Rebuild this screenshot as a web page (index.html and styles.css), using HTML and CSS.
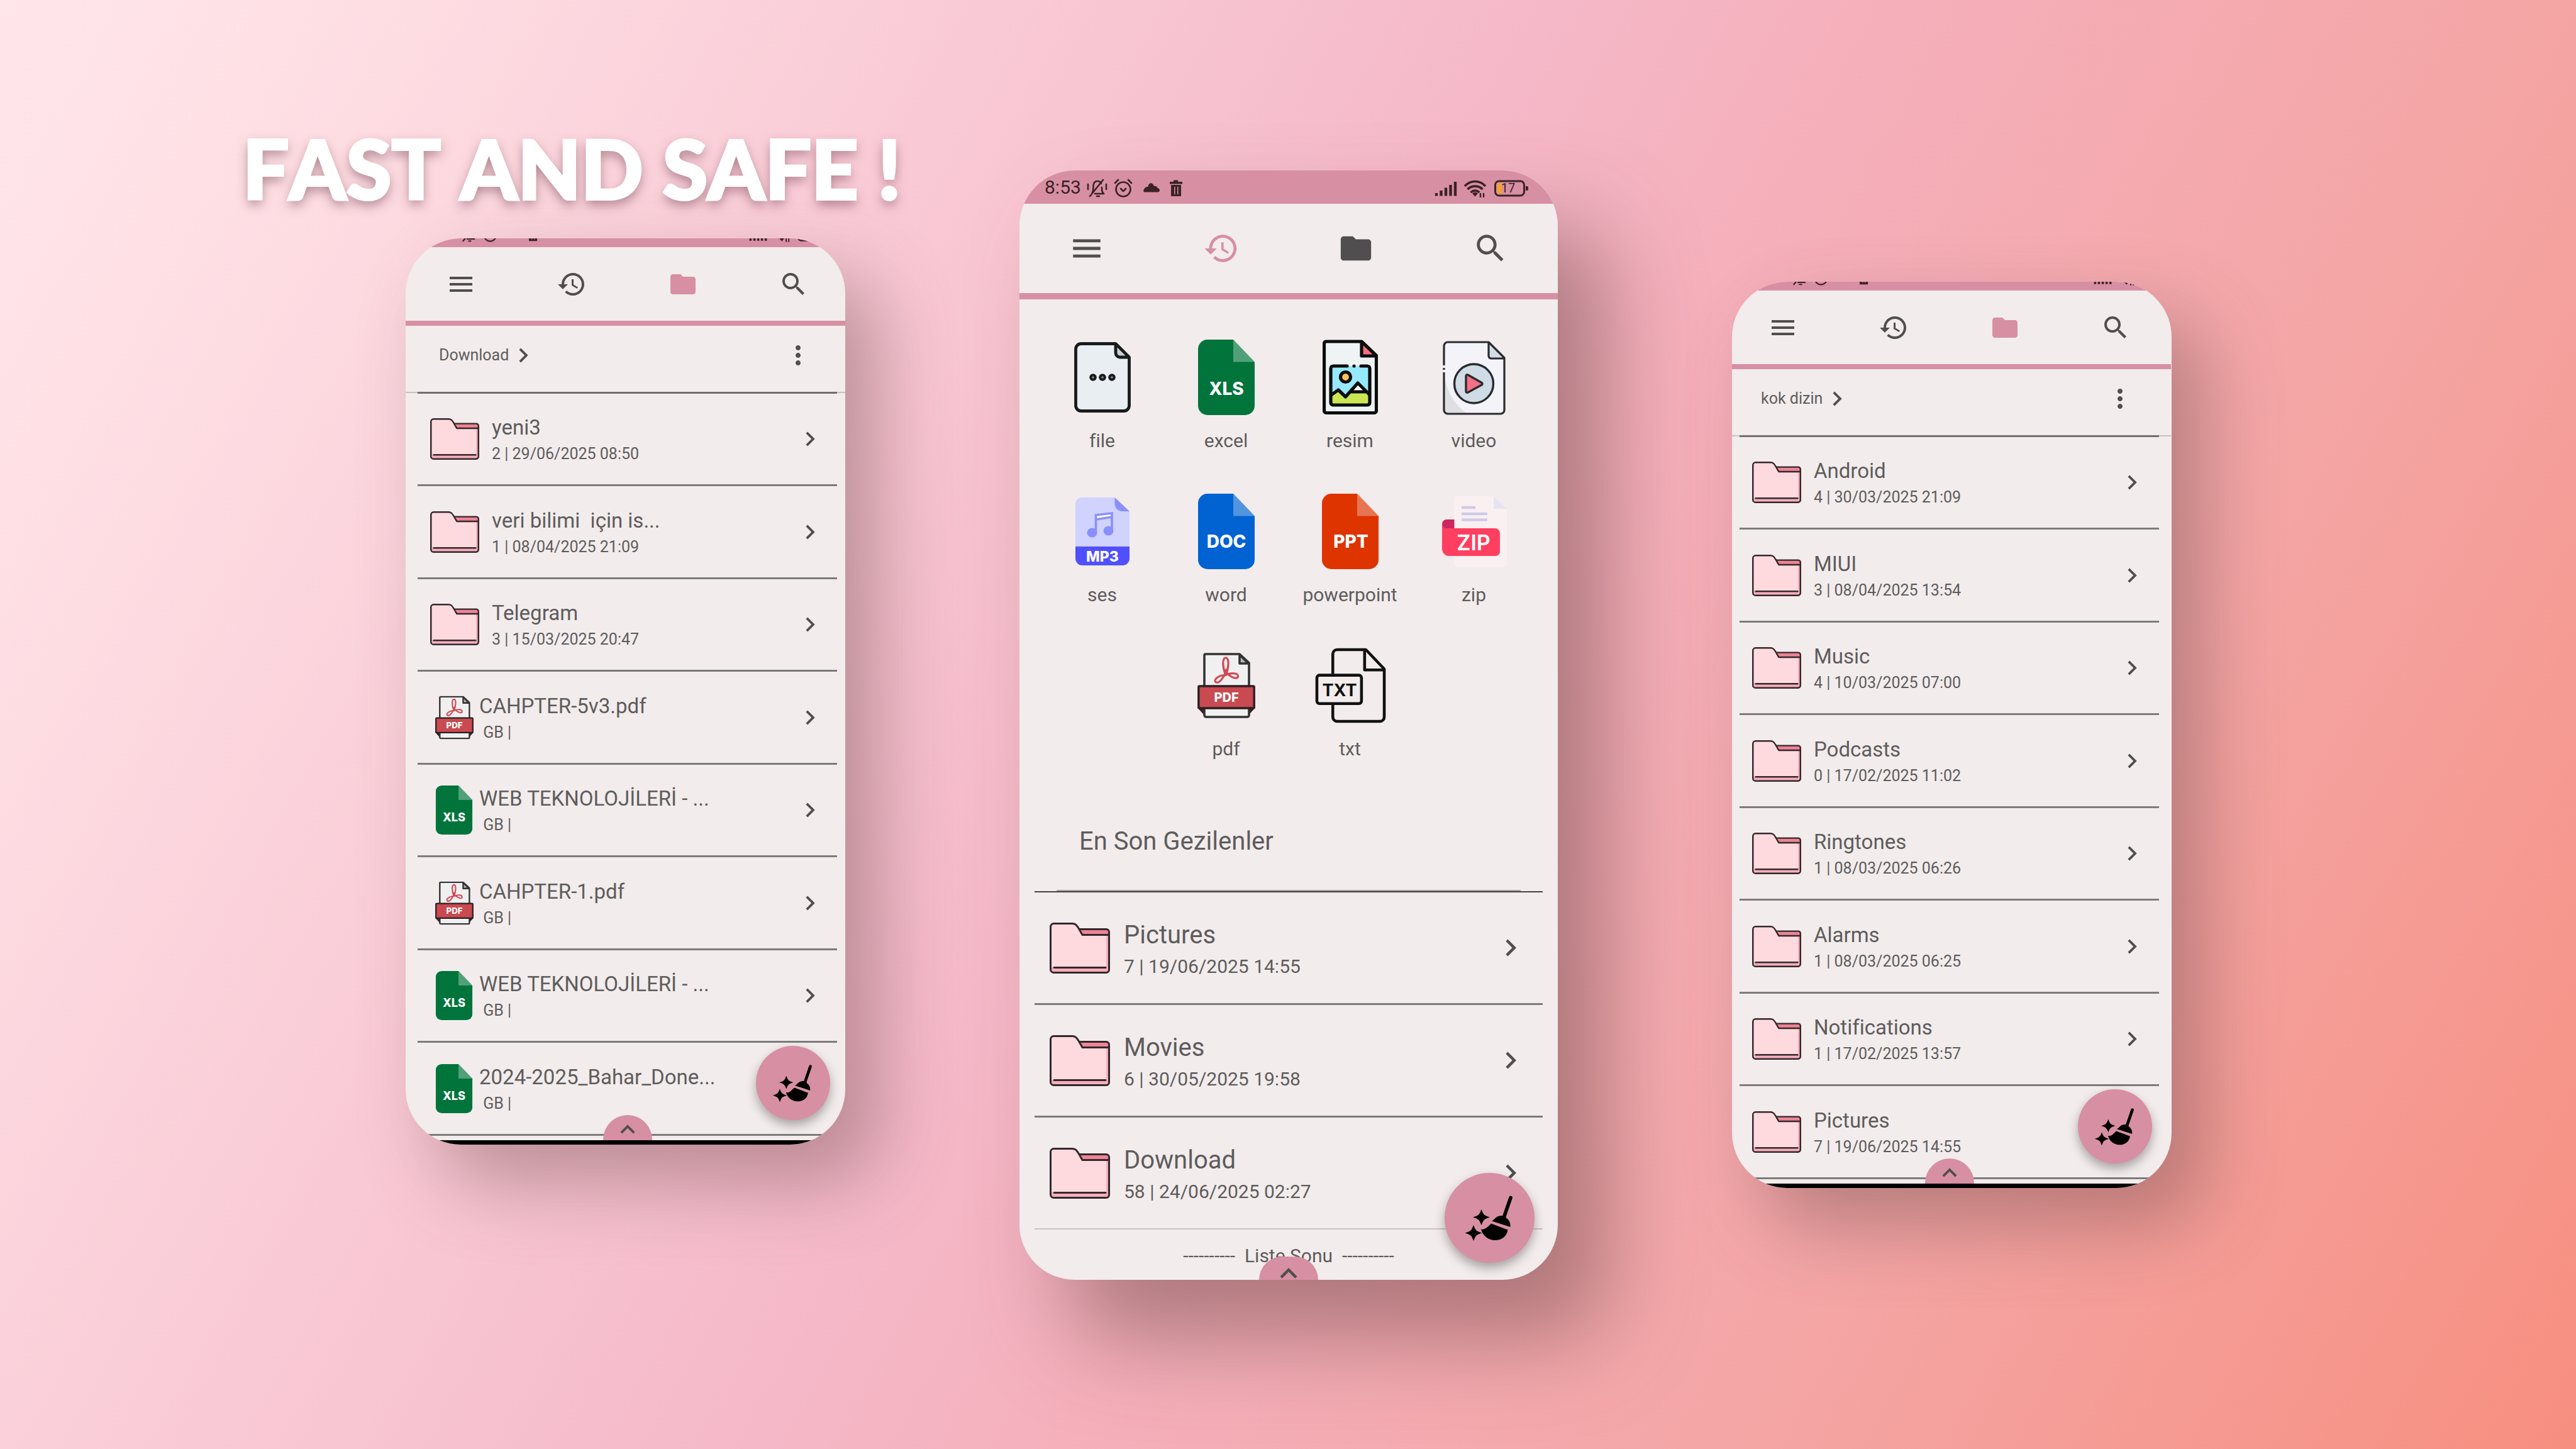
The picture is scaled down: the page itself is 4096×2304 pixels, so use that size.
FILE: index.html
```html
<!DOCTYPE html>
<html lang="tr">
<head>
<meta charset="utf-8">
<meta name="viewport" content="width=device-width, initial-scale=1">
<title>Fast and safe</title>
<link rel="stylesheet" href="styles.css">
</head>
<body>
<svg class="sprite" aria-hidden="true">
  <symbol id="i-menu" viewBox="0 0 24 24"><path d="M3 18h18v-2H3v2zm0-5h18v-2H3v2zm0-7v2h18V6H3z"/></symbol>
  <symbol id="i-history" viewBox="0 0 24 24"><path d="M13 3c-4.97 0-9 4.03-9 9H1l3.89 3.89.07.14L9 12H6c0-3.87 3.13-7 7-7s7 3.13 7 7-3.13 7-7 7c-1.93 0-3.68-.79-4.94-2.06l-1.42 1.42C8.27 19.99 10.51 21 13 21c4.97 0 9-4.03 9-9s-4.03-9-9-9zm-1 5v5l4.28 2.54.72-1.21-3.5-2.08V8H12z"/></symbol>
  <symbol id="i-folder" viewBox="0 0 24 24"><path d="M10 4H4c-1.1 0-1.99.9-1.99 2L2 18c0 1.1.9 2 2 2h16c1.1 0 2-.9 2-2V8c0-1.1-.9-2-2-2h-8l-2-2z"/></symbol>
  <symbol id="i-search" viewBox="0 0 24 24"><path d="M15.5 14h-.79l-.28-.27C15.41 12.59 16 11.11 16 9.5 16 5.91 13.09 3 9.5 3S3 5.91 3 9.5 5.91 16 9.5 16c1.61 0 3.09-.59 4.23-1.57l.27.28v.79l5 4.99L20.49 19l-4.99-5zm-6 0C7.01 14 5 11.99 5 9.5S7.01 5 9.5 5 14 7.01 14 9.5 11.99 14 9.5 14z"/></symbol>
  <symbol id="i-next" viewBox="0 0 24 24"><path d="M10 6L8.59 7.41 13.17 12l-4.58 4.59L10 18l6-6z"/></symbol>
  <symbol id="i-up" viewBox="0 0 24 24"><path d="M12 8l-6 6 1.41 1.41L12 10.83l4.59 4.58L18 14z"/></symbol>
  <symbol id="i-more" viewBox="0 0 24 24"><path d="M12 8c1.1 0 2-.9 2-2s-.9-2-2-2-2 .9-2 2 .9 2 2 2zm0 2c-1.1 0-2 .9-2 2s.9 2 2 2 2-.9 2-2-.9-2-2-2zm0 6c-1.1 0-2 .9-2 2s.9 2 2 2 2-.9 2-2-.9-2-2-2z"/></symbol>

  <symbol id="dir" viewBox="0 0 96 81">
    <path d="M50 11H90a4 4 0 0 1 4 4V24H50z" fill="#ee8495"/>
    <path d="M7 2H36C41 2 43 5 46 9L52 19.500H94.500V75a5 5 0 0 1-5 5H7a5 5 0 0 1-5-5V7a5 5 0 0 1 5-5z" fill="#f6aebb"/>
    <path d="M7 2H36C41 2 43 5 46 9L52 19.500H90V71H3V7a5 5 0 0 1 4-5z" fill="#fedade"/>
    <g fill="none" stroke="#33282b" stroke-width="3" stroke-linejoin="round" stroke-linecap="round">
      <path d="M48 10.500H90a4.500 4.500 0 0 1 4.500 4.500V75a4.500 4.500 0 0 1-4.500 4.500H6.500a5 5 0 0 1-5-5V6.500a5 5 0 0 1 5-5H36C41 1.500 43 4 46 9L52 19.500H94.500"/>
      <path d="M7 71.500H89"/>
    </g>
  </symbol>

  <symbol id="sheet" viewBox="0 0 90 120">
    <path d="M15 0H56L90 35.500V105a15 15 0 0 1-15 15H15a15 15 0 0 1-15-15V15A15 15 0 0 1 15 0z" fill="currentColor"/>
    <path d="M56 0L90 35.500H56z" fill="#fff" fill-opacity=".32"/>
  </symbol>

  <symbol id="file" viewBox="0 0 90 112">
    <path d="M10 2.500H66L87.500 25V101a8.500 8.500 0 0 1-8.500 8.500H11a8.500 8.500 0 0 1-8.500-8.500V11A8.500 8.500 0 0 1 11 2.500z" fill="#e8eef1"/>
    <path d="M66 2.500V17a7 7 0 0 0 7 7H87" fill="#c9cfd2"/>
    <path d="M66 2.500L87.500 24V101a8.500 8.500 0 0 1-8.500 8.500H11a8.500 8.500 0 0 1-8.500-8.500V11A8.500 8.500 0 0 1 11 2.500zV17a7 7 0 0 0 7 7H87" fill="none" stroke="#181b1c" stroke-width="4.800" stroke-linejoin="round"/>
    <g fill="#8b9092" stroke="#181b1c" stroke-width="4"><circle cx="30" cy="56" r="3.800"/><circle cx="45" cy="56" r="3.800"/><circle cx="60" cy="56" r="3.800"/></g>
  </symbol>

  <symbol id="image" viewBox="0 0 88 119">
    <path d="M6 3H63L85 27V113a3 3 0 0 1-3 3H6a3 3 0 0 1-3-3V6a3 3 0 0 1 3-3z" fill="#eef3f4"/>
    <path d="M63 4V26H84z" fill="#fb6c84"/>
    <rect x="13" y="42" width="62" height="62" rx="4" fill="#96e9fb"/>
    <path d="M13 88L25 80L36 91L46 83H68L75 88V101a3 3 0 0 1-3 3H16a3 3 0 0 1-3-3z" fill="#cbe653"/>
    <path d="M45 82L56 69L69 82z" fill="#fff"/>
    <g fill="none" stroke="#0b0d0c" stroke-width="5.200" stroke-linejoin="round" stroke-linecap="round">
      <path d="M62 3L85.500 25.500V113a3.500 3.500 0 0 1-3.500 3.500H6a3.500 3.500 0 0 1-3.500-3.500V6A3.500 3.500 0 0 1 6 3zV26H85"/>
      <path d="M39 42H17a4 4 0 0 0-4 4V100a4 4 0 0 0 4 4H71a4 4 0 0 0 4-4V46a4 4 0 0 0-4-4H61"/>
      <path d="M14 88L25 80L36.500 91L56 69L74 87M46 83H68"/>
      <circle cx="36.500" cy="59.500" r="8" fill="#fdc15e"/>
    </g>
    <circle cx="50" cy="42" r="2.600" fill="#0b0d0c"/>
  </symbol>

  <symbol id="video" viewBox="0 0 100 118">
    <path d="M8 2H73L98 27V110a6 6 0 0 1-6 6H8a6 6 0 0 1-6-6V8a6 6 0 0 1 6-6z" fill="#f5f3fa"/>
    <path d="M3 58C8 85 22 104 38 115H8a5 5 0 0 1-5-5z" fill="#dfdfe2"/>
    <path d="M73 3V24a4 4 0 0 0 4 4H97z" fill="#d2dde7"/>
    <path d="M2 39V8A6 6 0 0 1 8 2H73L98 27V110a6 6 0 0 1-6 6H8a6 6 0 0 1-6-6V50M73 2V24a4 4 0 0 0 4 4H97M2 43V46" fill="none" stroke="#2a2b2f" stroke-width="3.200" stroke-linejoin="round"/>
    <circle cx="49.500" cy="68" r="31" fill="#cfdce6" stroke="#2a2b2f" stroke-width="3.400"/>
    <path d="M37 56a2 2 0 0 1 3-2L62 66.500a2 2 0 0 1 0 3.500L40 82a2 2 0 0 1-3-2z" fill="#f57084" stroke="#2a2b2f" stroke-width="3.400" stroke-linejoin="round"/>
  </symbol>

  <symbol id="mp3" viewBox="0 0 86 108">
    <path d="M10 0H62.500L86 22V78H0V10A10 10 0 0 1 10 0z" fill="#d0d2ff"/>
    <path d="M62.500 0L86 22H75A12 12 0 0 1 62.500 10z" fill="#8a90fb"/>
    <path d="M0 78H86V97a11 11 0 0 1-11 11H11A11 11 0 0 1 0 97z" fill="#504ffd"/>
    <path d="M32.500 28L57 25V30L32.500 34z" fill="#fff"/>
    <path d="M32.500 56V28L58 25V52M32.500 35L58 31" fill="none" stroke="#8a90fb" stroke-width="3.600"/>
    <ellipse cx="26.500" cy="56" rx="8" ry="7.500" fill="#8a90fb"/><ellipse cx="52.500" cy="53" rx="8" ry="7.500" fill="#8a90fb"/>
  </symbol>

  <symbol id="zip" viewBox="0 0 103 113">
    <path d="M24 0H82L103 20V107a6 6 0 0 1-6 6H25a6 6 0 0 1-6-6V5a5 5 0 0 1 5-5z" fill="#faf0f2"/>
    <path d="M82 0L103 20H82z" fill="#e8e3f3"/>
    <path d="M31 18H53M31 28H72M31 37.500H72" stroke="#cfcbe6" stroke-width="4.400"/>
    <path d="M7 37H19.500V52H0V44a7 7 0 0 1 7-7z" fill="#ca2662"/>
    <path d="M0 44a7 7 0 0 0 7 7H84a8 8 0 0 1 8 8V88a7 7 0 0 1-7 7H11A11 11 0 0 1 0 84z" fill="#ff3f60"/>
  </symbol>

  <symbol id="pdf" viewBox="0 0 92 104">
    <path d="M2 88H90L81 98H11z" fill="#3a1f25" stroke="#3a1f25" stroke-width="2"/>
    <path d="M13 2H67L82 16V99a3 3 0 0 1-3 3H14a3 3 0 0 1-3-3V4a2 2 0 0 1 2-2z" fill="#f0f0f0" stroke="#343334" stroke-width="3.600" stroke-linejoin="round"/>
    <path d="M67 3V17H81z" fill="#b9b9b9" stroke="#343334" stroke-width="3.600" stroke-linejoin="round"/>
    <g fill="none" stroke="#d24a57" stroke-width="3.200" stroke-linecap="round">
      <path d="M44.500 34C40 24 39 8 45 8C51 8 50 24 45 35"/>
      <path d="M46 27C43 38 35 49 30 47C24 44 32 36 45 35"/>
      <path d="M43 27C48 36 60 43 64 39C67 33 57 30 43 36"/>
    </g>
    <rect x="1.800" y="53" width="88.400" height="35" rx="1.500" fill="#c94a50" stroke="#2b2024" stroke-width="3.400"/>
  </symbol>

  <symbol id="txt" viewBox="0 0 113 121">
    <g fill="none" stroke="#111" stroke-width="4.600" stroke-linejoin="round">
      <path d="M28 42V10A7 7 0 0 1 35 3H81L110.500 34V111a7 7 0 0 1-7 7H35a7 7 0 0 1-7-7V91"/>
      <path d="M79 4V35.500H110"/>
      <rect x="2.500" y="44" width="71.500" height="45.500" rx="4"/>
    </g>
  </symbol>

  <symbol id="broom" viewBox="0 0 143 143">
    <path d="M105 39.500L94.500 70" stroke="#000" stroke-width="5.600" stroke-linecap="round"/>
    <path d="M75 76.500C79 75 81 69.500 87 68.500C93 67 97 69 98.500 72C103 75 105 80 104.500 86z"/>
    <path d="M74 80.500L100.500 90.500C99 101 91 107 80 107C69 107 60 99 58 89.500C65 91 69 85 74 80.500z"/>
    <path d="M58.500 60C60.500 66 63 68.500 69.500 70.500C63 72.500 60.500 75 58.500 81C56.500 75 54 72.500 47.500 70.500C54 68.500 56.500 66 58.500 60z" stroke="#000" stroke-width="1.500"/>
    <path d="M46 85C48 91 50.500 93.500 57 95.500C50.500 97.500 48 100 46 106C44 100 41.500 97.500 35 95.500C41.500 93.500 44 91 46 85z" stroke="#000" stroke-width="1.500"/>
  </symbol>

  <symbol id="st-left" viewBox="0 0 160 53">
    <g fill="none" stroke="#3a2228" stroke-width="2.600" stroke-linecap="round" stroke-linejoin="round">
      <path d="M12 37C15 34 14 30 14.500 24C15 19 18 17 21 17C24 17 26 18 27 21M28 27C28 32 28 34 31 37H17M20 41H24M30 15L9 41M6 22V30M35 22V30"/>
      <circle cx="62" cy="30" r="11.500"/><path d="M58 29L62 33L66 29M49 20L54 15M75 20L70 15"/>
    </g>
    <path d="M97 34.500H117C121 34.500 121 28.500 116.500 28C116 25 113 24 111 25C109 18 102 19 101.500 26C96 25 91 34.500 97 34.500z" fill="#3a2228"/>
    <path d="M136 18H142V15.500H149V18H156V21.500H136zM138 23H154V41H138zM143 26V38H144.500V26zM148 26V38H149.500V26z" fill="#3a2228" fill-rule="evenodd"/>
  </symbol>
  <symbol id="st-right" viewBox="0 0 152 53">
    <path d="M3 40.500V36M10.500 40.500V32M18 40.500V27.500M25.500 40.500V23M33 40.500V18" fill="none" stroke="#3a2228" stroke-width="4.400"/>
    <g fill="none" stroke="#3a2228" stroke-width="3.600"><path d="M48 25C57 15 72 15 81 25M52.500 30C59 23.500 70 23.500 76.500 30M57.500 35C62 31 67 31 71.500 35"/></g>
    <path d="M60 36.500C63 34 66 34 69 36.500L64.500 41.500z" fill="#3a2228"/><path d="M73 36V43M78 36V43" stroke="#3a2228" stroke-width="2.400"/>
    <rect x="96.500" y="17" width="46" height="23" rx="6" fill="none" stroke="#3a2228" stroke-width="3"/>
    <path d="M145 25H147a2 2 0 0 1 2 2V30a2 2 0 0 1-2 2H145z" fill="#3a2228"/>
    <path d="M103 20H107V37H103a3.500 3.500 0 0 1-3.500-3.500V23.500A3.500 3.500 0 0 1 103 20z" fill="#f4a22e"/>
  </symbol>
</svg>

<main class="scene">
  <h1 class="headline">FAST AND SAFE !</h1>

  <section class="phone phone-left" aria-label="Download">
    <div class="screen">
      <div class="status">
        <svg class="st-left"><use href="#st-left"/></svg>
        <svg class="st-right"><use href="#st-right"/></svg>
      </div>
      <nav class="tabs">
        <button type="button" aria-label="Menu"><svg><use href="#i-menu"/></svg></button>
        <button type="button" aria-label="History"><svg><use href="#i-history"/></svg></button>
        <button type="button" class="on" aria-label="Folders"><svg><use href="#i-folder"/></svg></button>
        <button type="button" aria-label="Search"><svg><use href="#i-search"/></svg></button>
      </nav>
      <div class="crumbs">
        <a href="#download">Download</a><svg class="next"><use href="#i-next"/></svg>
        <button type="button" class="more" aria-label="More"><svg><use href="#i-more"/></svg></button>
      </div>
      <ul class="list">
        <li><a href="#yeni3"><svg class="dir"><use href="#dir"/></svg><span class="meta"><b>yeni3</b><small>2 | 29/06/2025 08:50</small></span><svg class="next"><use href="#i-next"/></svg></a></li>
        <li><a href="#veri"><svg class="dir"><use href="#dir"/></svg><span class="meta"><b>veri bilimi&nbsp; için is...</b><small>1 | 08/04/2025 21:09</small></span><svg class="next"><use href="#i-next"/></svg></a></li>
        <li><a href="#telegram"><svg class="dir"><use href="#dir"/></svg><span class="meta"><b>Telegram</b><small>3 | 15/03/2025 20:47</small></span><svg class="next"><use href="#i-next"/></svg></a></li>
        <li><a class="doc" href="#c5"><svg class="pdf" viewBox="0 0 92 104"><use href="#pdf" width="92" height="104"/><text x="46" y="78" class="t-pdf">PDF</text></svg><span class="meta"><b>CAHPTER-5v3.pdf</b><small>&nbsp;GB |</small></span><svg class="next"><use href="#i-next"/></svg></a></li>
        <li><a class="doc" href="#web1"><svg class="xls" viewBox="0 0 90 120"><use class="green" href="#sheet" width="90" height="120"/><text x="45" y="88" class="t-badge">XLS</text></svg><span class="meta"><b>WEB TEKNOLOJİLERİ - ...</b><small>&nbsp;GB |</small></span><svg class="next"><use href="#i-next"/></svg></a></li>
        <li><a class="doc" href="#c1"><svg class="pdf" viewBox="0 0 92 104"><use href="#pdf" width="92" height="104"/><text x="46" y="78" class="t-pdf">PDF</text></svg><span class="meta"><b>CAHPTER-1.pdf</b><small>&nbsp;GB |</small></span><svg class="next"><use href="#i-next"/></svg></a></li>
        <li><a class="doc" href="#web2"><svg class="xls" viewBox="0 0 90 120"><use class="green" href="#sheet" width="90" height="120"/><text x="45" y="88" class="t-badge">XLS</text></svg><span class="meta"><b>WEB TEKNOLOJİLERİ - ...</b><small>&nbsp;GB |</small></span><svg class="next"><use href="#i-next"/></svg></a></li>
        <li><a class="doc" href="#bahar"><svg class="xls" viewBox="0 0 90 120"><use class="green" href="#sheet" width="90" height="120"/><text x="45" y="88" class="t-badge">XLS</text></svg><span class="meta"><b>2024-2025_Bahar_Done...</b><small>&nbsp;GB |</small></span></a></li>
      </ul>
      <button type="button" class="pull" aria-label="Expand"><svg><use href="#i-up"/></svg></button>
      <button type="button" class="fab" aria-label="Clean"><svg><use href="#broom"/></svg></button>
    </div>
    <div class="navbar"></div>
  </section>

  <section class="phone phone-main" aria-label="Recent">
    <div class="screen">
      <div class="status">
        <span class="time">8:53</span>
        <svg class="st-left"><use href="#st-left"/></svg>
        <svg class="st-right" viewBox="0 0 152 53"><use href="#st-right" width="152" height="53"/><text x="117" y="35" class="t-bat">17</text></svg>
      </div>
      <nav class="tabs">
        <button type="button" aria-label="Menu"><svg><use href="#i-menu"/></svg></button>
        <button type="button" class="on" aria-label="History"><svg><use href="#i-history"/></svg></button>
        <button type="button" aria-label="Folders"><svg><use href="#i-folder"/></svg></button>
        <button type="button" aria-label="Search"><svg><use href="#i-search"/></svg></button>
      </nav>
      <ul class="types">
        <li><a href="#files"><svg viewBox="0 0 120 120"><use href="#file" x="15" y="4" width="90" height="112"/></svg>file</a></li>
        <li><a href="#excel"><svg viewBox="0 0 120 120"><use class="green" href="#sheet" x="15" width="90" height="120"/><text x="60" y="88" class="t-badge">XLS</text></svg>excel</a></li>
        <li><a href="#resim"><svg viewBox="0 0 120 120"><use href="#image" x="16" width="88" height="119"/></svg>resim</a></li>
        <li><a href="#videos"><svg viewBox="0 0 120 120"><use href="#video" x="10" y="2" width="100" height="118"/></svg>video</a></li>
        <li><a href="#ses"><svg viewBox="0 0 120 120"><use href="#mp3" x="17" y="6" width="86" height="108"/><text x="60" y="108" class="t-mp3">MP3</text></svg>ses</a></li>
        <li><a href="#word"><svg viewBox="0 0 120 120"><use class="blue" href="#sheet" x="15" width="90" height="120"/><text x="60" y="86" class="t-badge">DOC</text></svg>word</a></li>
        <li><a href="#powerpoint"><svg viewBox="0 0 120 120"><use class="red" href="#sheet" x="15" width="90" height="120"/><text x="61" y="86" class="t-badge">PPT</text></svg>powerpoint</a></li>
        <li><a href="#zips"><svg viewBox="0 0 120 120"><use href="#zip" x="9" y="4" width="103" height="113"/><text x="59" y="90" class="t-zip">ZIP</text></svg>zip</a></li>
        <li><a href="#pdfs"><svg viewBox="0 0 120 120"><use href="#pdf" x="14" y="8" width="92" height="104"/><text x="60" y="86" class="t-pdf">PDF</text></svg>pdf</a></li>
        <li><a href="#txts"><svg viewBox="0 0 120 120"><use href="#txt" x="4" width="113" height="120"/><text x="43" y="77" class="t-txt">TXT</text></svg>txt</a></li>
      </ul>
      <h2 class="recent">En Son Gezilenler</h2>
      <ul class="list">
        <li><a href="#pictures"><svg class="dir"><use href="#dir"/></svg><span class="meta"><b>Pictures</b><small>7 | 19/06/2025 14:55</small></span><svg class="next"><use href="#i-next"/></svg></a></li>
        <li><a href="#movies"><svg class="dir"><use href="#dir"/></svg><span class="meta"><b>Movies</b><small>6 | 30/05/2025 19:58</small></span><svg class="next"><use href="#i-next"/></svg></a></li>
        <li><a href="#downloads"><svg class="dir"><use href="#dir"/></svg><span class="meta"><b>Download</b><small>58 | 24/06/2025 02:27</small></span><svg class="next"><use href="#i-next"/></svg></a></li>
      </ul>
      <p class="end">----------&nbsp; Liste Sonu &nbsp;----------</p>
      <button type="button" class="pull" aria-label="Expand"><svg><use href="#i-up"/></svg></button>
      <button type="button" class="fab" aria-label="Clean"><svg><use href="#broom"/></svg></button>
    </div>
  </section>

  <section class="phone phone-right" aria-label="kok dizin">
    <div class="screen">
      <div class="status">
        <svg class="st-left"><use href="#st-left"/></svg>
        <svg class="st-right"><use href="#st-right"/></svg>
      </div>
      <nav class="tabs">
        <button type="button" aria-label="Menu"><svg><use href="#i-menu"/></svg></button>
        <button type="button" aria-label="History"><svg><use href="#i-history"/></svg></button>
        <button type="button" class="on" aria-label="Folders"><svg><use href="#i-folder"/></svg></button>
        <button type="button" aria-label="Search"><svg><use href="#i-search"/></svg></button>
      </nav>
      <div class="crumbs">
        <a href="#root">kok dizin</a><svg class="next"><use href="#i-next"/></svg>
        <button type="button" class="more" aria-label="More"><svg><use href="#i-more"/></svg></button>
      </div>
      <ul class="list">
        <li><a href="#android"><svg class="dir"><use href="#dir"/></svg><span class="meta"><b>Android</b><small>4 | 30/03/2025 21:09</small></span><svg class="next"><use href="#i-next"/></svg></a></li>
        <li><a href="#miui"><svg class="dir"><use href="#dir"/></svg><span class="meta"><b>MIUI</b><small>3 | 08/04/2025 13:54</small></span><svg class="next"><use href="#i-next"/></svg></a></li>
        <li><a href="#music"><svg class="dir"><use href="#dir"/></svg><span class="meta"><b>Music</b><small>4 | 10/03/2025 07:00</small></span><svg class="next"><use href="#i-next"/></svg></a></li>
        <li><a href="#podcasts"><svg class="dir"><use href="#dir"/></svg><span class="meta"><b>Podcasts</b><small>0 | 17/02/2025 11:02</small></span><svg class="next"><use href="#i-next"/></svg></a></li>
        <li><a href="#ringtones"><svg class="dir"><use href="#dir"/></svg><span class="meta"><b>Ringtones</b><small>1 | 08/03/2025 06:26</small></span><svg class="next"><use href="#i-next"/></svg></a></li>
        <li><a href="#alarms"><svg class="dir"><use href="#dir"/></svg><span class="meta"><b>Alarms</b><small>1 | 08/03/2025 06:25</small></span><svg class="next"><use href="#i-next"/></svg></a></li>
        <li><a href="#notifications"><svg class="dir"><use href="#dir"/></svg><span class="meta"><b>Notifications</b><small>1 | 17/02/2025 13:57</small></span><svg class="next"><use href="#i-next"/></svg></a></li>
        <li><a href="#pictures2"><svg class="dir"><use href="#dir"/></svg><span class="meta"><b>Pictures</b><small>7 | 19/06/2025 14:55</small></span></a></li>
      </ul>
      <button type="button" class="pull" aria-label="Expand"><svg><use href="#i-up"/></svg></button>
      <button type="button" class="fab" aria-label="Clean"><svg><use href="#broom"/></svg></button>
    </div>
    <div class="navbar"></div>
  </section>
</main>
</body>
</html>
```
FILE: styles.css
```css
* { box-sizing: border-box; }

body {
  margin: 0;
  font-family: Roboto, "Liberation Sans", sans-serif;
  color: #5e5c5c;
}

.sprite { position: absolute; width: 0; height: 0; }

ul { margin: 0; padding: 0; list-style: none; }
a { color: inherit; text-decoration: none; }
button { padding: 0; border: 0; background: none; color: inherit; font: inherit; }
svg { display: block; flex: none; fill: currentColor; }

/* Backdrop and the three devices */
.scene {
  min-height: 100vh;
  display: grid;
  grid-template-columns: 645fr 699fr 277fr 856fr 277fr 699fr 643fr;
  align-items: start;
  overflow: hidden;
  background: linear-gradient(119deg, #ffe6ea 0%, #fedfe4 10%, #f5b9c9 45%, #f5b0bc 55%, #f4a5a4 76%, #f78f80 100%);
}

.headline {
  grid-area: 1 / 1 / 2 / 4;
  margin: 187px 0 0;
  padding-left: 386px;
  font-family: Lato, "Open Sans", sans-serif;
  font-weight: 900;
  font-size: 130px;
  line-height: 160px;
  font-kerning: none;
  color: #fff;
  white-space: nowrap;
  -webkit-text-stroke: 4px #fff;
  text-shadow: 0 8px 18px rgba(90, 40, 55, .5);
}

.phone {
  --row-title: 33px;
  --row-sub: 25px;
  position: relative;
  overflow: hidden;
  border-radius: 88px;
  background: #f2ecec;
}
.phone-left { grid-area: 1 / 2; margin-top: 379px; }
.phone-main { grid-area: 1 / 4; margin-top: 271px; }
.phone-right { grid-area: 1 / 6; margin-top: 448px; }

.scene .phone-left, .scene .phone-right { box-shadow: 52px 60px 120px rgba(105, 70, 72, .42); }
.scene .phone-main { box-shadow: 76px 92px 140px rgba(105, 68, 68, .5); }

.screen { position: relative; }
.phone-left .screen { margin-right: -6px; }
.phone-right .screen { margin-left: -7px; margin-right: 1px; }

/* Status strip */
.status {
  display: flex;
  align-items: center;
  height: 43px;
  margin-top: -29px;
  padding: 0 36px 0 84px;
  background: #d78fa3;
}
.st-left { width: 130px; height: 43px; }
.st-right { width: 123px; height: 43px; margin-left: auto; }
.phone-right .status { padding: 0 0 0 98px; }
.phone-main .status { height: 53px; margin-top: 0; padding: 0 44px 0 40px; }
.phone-main .st-left { width: 160px; height: 53px; margin-left: 5px; }
.phone-main .st-right { width: 152px; height: 53px; }
.time { font-size: 30px; line-height: 56px; color: #3a2228; }

/* Top tabs */
.tabs {
  display: grid;
  grid-template-columns: repeat(4, 1fr);
  height: 125px;
  border-bottom: 8px solid #d78fa3;
  color: #504e4e;
}
.tabs button { display: grid; place-items: center; }
.tabs svg { width: 48px; height: 48px; }
.tabs .on { color: #d78fa3; }
.phone-main .tabs { height: 152px; border-bottom-width: 10px; }
.phone-main .tabs svg { width: 58px; height: 58px; }

/* Breadcrumb bar */
.crumbs {
  display: flex;
  align-items: center;
  height: 107px;
  padding: 0 57px 11px 53px;
  border-bottom: 2px solid #c6c3c3;
  font-size: 25px;
  line-height: 32px;
}
.next { width: 46px; height: 46px; color: #504e4e; }
.more { margin-left: auto; color: #504e4e; }
.more svg { width: 48px; height: 48px; }

/* Rows */
.list {
  display: grid;
  grid-auto-rows: 147px 148px;
  margin: -2px 19px 0;
  border-top: 3px solid #706e6e;
}
.list li { border-bottom: 3px solid #7d7b7b; }
.list a { display: flex; align-items: center; height: 100%; padding: 0 20px; }
.dir { width: 78px; height: 68px; margin-right: 20px; }
.list .doc { padding-left: 28px; }
.pdf { width: 61px; height: 70px; margin-right: 9px; }
.xls { width: 60px; height: 78px; margin-right: 10px; }
.meta { flex: 1; padding-top: 8px; white-space: nowrap; }
.meta b, .meta small { display: block; font-weight: 400; }
.meta b { font-size: var(--row-title); line-height: 40px; }
.meta small { font-size: var(--row-sub); line-height: 44px; }

.phone-main { --row-title: 40px; --row-sub: 30px; }
.phone-main .list {
  grid-auto-rows: 179px;
  margin: 0 24px;
  border-top: 2px solid #4e3f42;
}
.phone-main .list a { padding: 0 24px; }
.phone-main .list li:last-child { height: 178px; border-bottom: 2px solid #c8c4c4; }
.phone-main .dir { width: 96px; height: 81px; margin-right: 22px; }
.phone-main .next { width: 54px; height: 54px; }
.phone-main .meta { padding-top: 11px; }
.phone-main .meta b { line-height: 48px; }
.phone-main .meta small { line-height: 52px; }

/* File types */
.types {
  display: flex;
  flex-wrap: wrap;
  justify-content: center;
  row-gap: 66px;
  padding: 64px 34px 0 32px;
}
.types li { width: 197px; }
.types a {
  display: flex;
  flex-direction: column;
  align-items: center;
  gap: 23px;
  font-size: 30px;
  line-height: 36px;
}
.types svg { width: 120px; height: 120px; }
.green { color: #00743b; }
.blue { color: #0162d2; }
.red { color: #de3400; }

.recent {
  margin: 105px 59px 0;
  padding: 0 36px 53px;
  border-bottom: 2px solid #a5a1a1;
  font-weight: 400;
  font-size: 40px;
  line-height: 48px;
}

.end { margin: 0; padding: 21px 0 18px; font-size: 30px; line-height: 40px; text-align: center; }

/* Controls floating over the lists */
.phone-left .screen, .phone-right .screen { padding-bottom: 7px; }
.navbar { position: relative; height: 7px; background: #000; }

.pull {
  position: absolute;
  left: 50%;
  bottom: 0;
  width: 78px;
  height: 40px;
  margin-left: -39px;
  border-radius: 39px 39px 0 0;
  background: #d78fa3;
  color: #504e4e;
  display: grid;
  justify-items: center;
}
.pull svg { width: 46px; height: 46px; }
.phone-main .pull { width: 94px; height: 37px; margin-left: -47px; border-radius: 47px 47px 0 0; }
.phone-main .pull svg { width: 54px; height: 54px; }

.fab {
  position: absolute;
  right: 30px;
  bottom: 32px;
  width: 118px;
  height: 118px;
  border-radius: 50%;
  background: #d78fa3;
  color: #000;
  box-shadow: 0 8px 16px rgba(60, 50, 50, .4);
}
.fab svg { width: 100%; height: 100%; }
.phone-main .fab { right: 37px; bottom: 27px; width: 143px; height: 143px; }

/* Lettering inside file icons */
.t-badge, .t-mp3, .t-zip, .t-pdf, .t-txt {
  font-family: Inter, Roboto, sans-serif;
  font-weight: 800;
  text-anchor: middle;
  fill: #fff;
}
.t-badge { font-size: 28px; }
.t-mp3 { font-size: 23px; }
.t-zip { font-size: 34px; font-weight: 600; }
.t-pdf { font-size: 20px; }
.t-txt { font-size: 27px; font-weight: 700; fill: #111; }
.t-bat { font-family: Roboto, sans-serif; font-size: 20px; text-anchor: middle; fill: #3a2228; }
```
